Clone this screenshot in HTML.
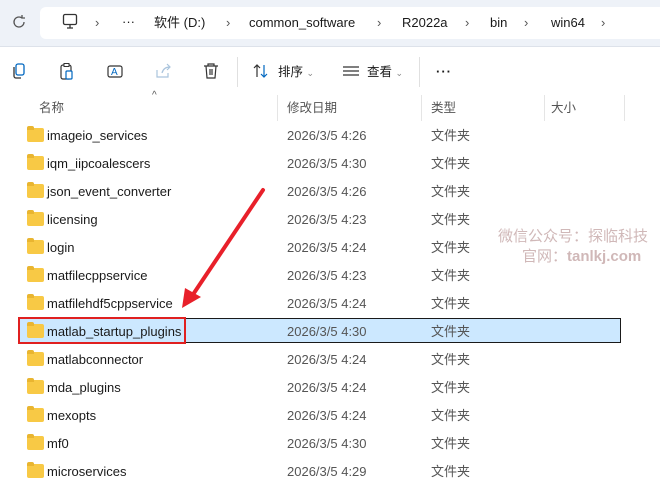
<!DOCTYPE html>
<html><head><meta charset="utf-8"><style>
*{box-sizing:border-box;margin:0;padding:0}
body{width:660px;height:484px;overflow:hidden;background:#fff;font-family:"Liberation Sans","Noto Sans CJK SC",sans-serif;font-size:13px;line-height:16px;color:#1a1a1a;position:relative}
.top{position:absolute;left:0;top:0;width:660px;height:47px;background:#eef2f8;border-bottom:1px solid #dde2ea}
.addr{position:absolute;left:40px;top:7px;width:640px;height:32px;background:#fff;border-radius:6px}
.t{position:absolute;white-space:nowrap}
.sep{position:absolute;top:57px;width:1px;height:30px;background:#e0e0e0}
.hdr{position:absolute;top:95px;height:26px;color:#555;font-size:12.5px}
.vl{position:absolute;top:95px;width:1px;height:26px;background:#e5e5e5}
.row{position:absolute;left:19px;width:602px;height:28px}
.row .n{position:absolute;left:28px;top:7px}
.row .d{position:absolute;left:268px;top:7px;color:#555}
.row .k{position:absolute;left:412px;top:7px;color:#555}
.fold{position:absolute;left:8px;top:7px;width:17px;height:14px;background:#f8c945;border-radius:2px}
.fold:before{content:"";position:absolute;left:0;top:-2px;width:7px;height:4px;background:#e9b530;border-radius:2px 2px 0 0}
.ic{position:absolute;top:62px;width:18px;height:18px}
</style></head><body>
<div class="top"></div>
<div class="addr"></div>
<svg class="t" style="left:11px;top:14px" width="16" height="16" viewBox="0 0 16 16"><path d="M13 8a5 5 0 1 1-2-4M11 1v3h3" fill="none" stroke="#555" stroke-width="1.3"/></svg>
<svg class="t" style="left:62px;top:13px" width="16" height="18" viewBox="0 0 16 18"><rect x="1.5" y="1.5" width="13" height="10" rx="1.5" fill="none" stroke="#333" stroke-width="1.3"/><path d="M5 15h6M8 12v3" stroke="#333" stroke-width="1.3"/></svg>
<div class="t" style="left:95px;top:15px;color:#555">›</div>
<div class="t" style="left:122px;top:14px">···</div>
<div class="t" style="left:154px;top:15px">软件 (D:)</div>
<div class="t" style="left:226px;top:15px;color:#555">›</div>
<div class="t" style="left:249px;top:15px">common_software</div>
<div class="t" style="left:377px;top:15px;color:#555">›</div>
<div class="t" style="left:402px;top:15px">R2022a</div>
<div class="t" style="left:465px;top:15px;color:#555">›</div>
<div class="t" style="left:490px;top:15px">bin</div>
<div class="t" style="left:524px;top:15px;color:#555">›</div>
<div class="t" style="left:551px;top:15px">win64</div>
<div class="t" style="left:601px;top:15px;color:#555">›</div>

<svg class="ic" style="left:10px" viewBox="0 0 18 18"><rect x="6" y="2" width="8" height="11" rx="2" fill="none" stroke="#0067c0" stroke-width="1.3"/><path d="M4 5v9a2 2 0 0 0 2 2h5" fill="none" stroke="#333" stroke-width="1.3"/></svg>
<svg class="ic" style="left:58px" viewBox="0 0 18 18"><rect x="3" y="3" width="10" height="14" rx="2" fill="none" stroke="#333" stroke-width="1.2"/><rect x="6" y="1.5" width="5" height="3" fill="#fff" stroke="#333"/><rect x="8" y="9" width="6" height="8" rx="1" fill="#fff" stroke="#0067c0" stroke-width="1.2"/></svg>
<svg class="ic" style="left:106px" viewBox="0 0 18 18"><rect x="2" y="4" width="14" height="11" rx="2" fill="none" stroke="#333" stroke-width="1.2"/><text x="5" y="13" font-size="10" fill="#0067c0" font-family="Liberation Sans">A</text></svg>
<svg class="ic" style="left:154px" viewBox="0 0 18 18"><path d="M3 8v7h11v-4M8 11c1-4 4-6 8-6M13 2l3 3-3 3" fill="none" stroke="#aac4dd" stroke-width="1.2"/></svg>
<svg class="ic" style="left:202px" viewBox="0 0 18 18"><path d="M2 4h14M6 4V2h6v2M4 4l1 12h8l1-12M8 7v6M10 7v6" fill="none" stroke="#333" stroke-width="1.2"/></svg>
<div class="sep" style="left:237px"></div>
<svg class="ic" style="left:252px" viewBox="0 0 18 18"><path d="M5 15V3M2 6l3-3 3 3" fill="none" stroke="#333" stroke-width="1.2"/><path d="M12 3v12M9 12l3 3 3-3" fill="none" stroke="#0067c0" stroke-width="1.2"/></svg>
<div class="t" style="left:278px;top:64px;font-size:12.5px">排序 <span style="color:#888;font-size:9px">⌄</span></div>
<svg class="ic" style="left:342px" viewBox="0 0 18 18"><path d="M1 5h16M1 9h16M1 13h16" stroke="#333" stroke-width="1.2"/></svg>
<div class="t" style="left:367px;top:64px;font-size:12.5px">查看 <span style="color:#888;font-size:9px">⌄</span></div>
<div class="sep" style="left:419px"></div>
<div class="t" style="left:436px;top:64px;font-weight:bold;letter-spacing:1px">···</div>

<div class="t" style="left:152px;top:88px;color:#555;font-size:10px">^</div>
<div class="hdr t" style="left:39px;top:100px">名称</div>
<div class="vl" style="left:277px"></div>
<div class="hdr t" style="left:287px;top:100px">修改日期</div>
<div class="vl" style="left:421px"></div>
<div class="hdr t" style="left:431px;top:100px">类型</div>
<div class="vl" style="left:544px"></div>
<div class="hdr t" style="left:551px;top:100px">大小</div>
<div class="vl" style="left:624px"></div>

<div class="row" style="top:121px"><div class="fold"></div><div class="n">imageio_services</div><div class="d">2026/3/5 4:26</div><div class="k">文件夹</div></div>
<div class="row" style="top:149px"><div class="fold"></div><div class="n">iqm_iipcoalescers</div><div class="d">2026/3/5 4:30</div><div class="k">文件夹</div></div>
<div class="row" style="top:177px"><div class="fold"></div><div class="n">json_event_converter</div><div class="d">2026/3/5 4:26</div><div class="k">文件夹</div></div>
<div class="row" style="top:205px"><div class="fold"></div><div class="n">licensing</div><div class="d">2026/3/5 4:23</div><div class="k">文件夹</div></div>
<div class="row" style="top:233px"><div class="fold"></div><div class="n">login</div><div class="d">2026/3/5 4:24</div><div class="k">文件夹</div></div>
<div class="row" style="top:261px"><div class="fold"></div><div class="n">matfilecppservice</div><div class="d">2026/3/5 4:23</div><div class="k">文件夹</div></div>
<div class="row" style="top:289px"><div class="fold"></div><div class="n">matfilehdf5cppservice</div><div class="d">2026/3/5 4:24</div><div class="k">文件夹</div></div>
<div class="row" style="top:318px;height:25px;background:#cce8ff;border:1px solid #1a1a1a"><div class="fold" style="top:5px;left:7px"></div><div class="n" style="top:5px;left:27px">matlab_startup_plugins</div><div class="d" style="top:5px;left:267px">2026/3/5 4:30</div><div class="k" style="top:5px;left:411px">文件夹</div></div>
<div class="t" style="left:18px;top:317px;width:168px;height:27px;border:2px solid #e02020"></div>
<div class="row" style="top:345px"><div class="fold"></div><div class="n">matlabconnector</div><div class="d">2026/3/5 4:24</div><div class="k">文件夹</div></div>
<div class="row" style="top:373px"><div class="fold"></div><div class="n">mda_plugins</div><div class="d">2026/3/5 4:24</div><div class="k">文件夹</div></div>
<div class="row" style="top:401px"><div class="fold"></div><div class="n">mexopts</div><div class="d">2026/3/5 4:24</div><div class="k">文件夹</div></div>
<div class="row" style="top:429px"><div class="fold"></div><div class="n">mf0</div><div class="d">2026/3/5 4:30</div><div class="k">文件夹</div></div>
<div class="row" style="top:457px"><div class="fold"></div><div class="n">microservices</div><div class="d">2026/3/5 4:29</div><div class="k">文件夹</div></div>

<svg class="t" style="left:0;top:0" width="660" height="484"><path d="M263 190L192 296" stroke="#e8202a" stroke-width="4" stroke-linecap="round"/><path d="M182 308l3-20 16 9z" fill="#e8202a"/></svg>
<div class="t" style="left:498px;top:228px;font-size:15px;line-height:18px;color:#d0b8b8">微信公众号：探临科技</div>
<div class="t" style="left:522px;top:248px;font-size:15px;line-height:18px;color:#d0b8b8">官网：<b>tanlkj.com</b></div>
</body></html>
